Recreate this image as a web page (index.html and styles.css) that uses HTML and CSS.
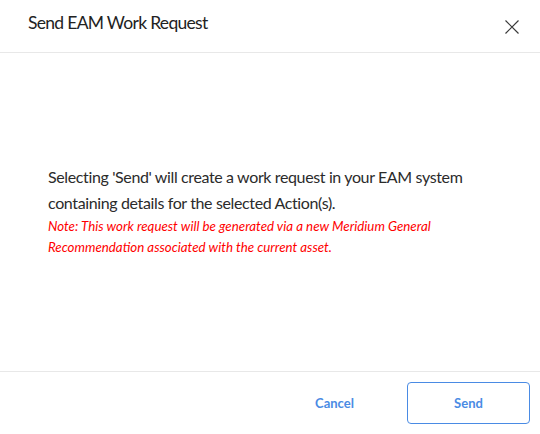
FILE: index.html
```html
<!DOCTYPE html>
<html>
<head>
<meta charset="utf-8">
<link rel="stylesheet" href="styles.css">
</head>
<body>
<div class="dialog">
  <header class="dlg-header">
    <h1 class="dlg-title">Send EAM Work Request</h1>
    <button class="dlg-close" aria-label="Close">
      <svg width="14" height="14" viewBox="0 0 14 14"><path d="M0.5 0.5L13.5 13.5M13.5 0.5L0.5 13.5" stroke="#3a3a3a" stroke-width="1.2" fill="none"/></svg>
    </button>
  </header>
  <main class="dlg-body">
    <div class="msg">
      <p class="msg-main">Selecting 'Send' will create a work request in your EAM system containing details for the selected Action(s).</p>
      <p class="msg-note">Note: This work request will be generated via a new Meridium General Recommendation associated with the current asset.</p>
    </div>
  </main>
  <footer class="dlg-footer">
    <button class="btn btn-text">Cancel</button>
    <button class="btn btn-outline">Send</button>
  </footer>
</div>
</body>
</html>
```

FILE: styles.css
```css
html, body {
  margin: 0;
  padding: 0;
  background: #fff;
}
body {
  font-family: "Lato", "Open Sans", sans-serif;
  color: #2b2b2b;
}
.dialog {
  width: 540px;
  height: 434px;
  display: flex;
  flex-direction: column;
}
.dlg-header {
  border-bottom: 1px solid #e8e8e8;
  display: flex;
  align-items: center;
  justify-content: space-between;
  padding: 0 21px 0 28px;
  box-sizing: border-box;
  height: 53px;
}
.dlg-title {
  margin: 0;
  font-size: 17.5px;
  letter-spacing: -0.7px;
  font-weight: 400;
  color: #222;
  position: relative;
  top: -4px;
}
.dlg-close {
  border: 0;
  background: none;
  padding: 0;
  width: 14px;
  height: 14px;
  display: flex;
  position: relative;
  top: 1px;
}
.dlg-body {
  flex: 1;
  display: flex;
  align-items: center;
  padding: 0 40px 0 48px;
}
.msg {
  position: relative;
  top: -1px;
}
.msg-main {
  margin: 0;
  font-size: 16px;
  letter-spacing: -0.37px;
  line-height: 26px;
  color: #2b2b2b;
}
.msg-note {
  margin: 0;
  font-size: 13.3px;
  line-height: 21px;
  font-style: italic;
  color: #ff0000;
}
.dlg-footer {
  height: 63px;
  border-top: 1px solid #e8e8e8;
  box-sizing: border-box;
  display: flex;
  justify-content: flex-end;
  align-items: center;
  gap: 11px;
  padding: 0 10px 0 0;
}
.btn {
  width: 123px;
  height: 42px;
  font-family: inherit;
  font-size: 13px;
  font-weight: 700;
  color: #4a8be4;
  background: #fff;
  border-radius: 4px;
  cursor: pointer;
}
.btn-text {
  border: 1px solid transparent;
}
.btn-outline {
  border: 1px solid #4a8be4;
}
```
